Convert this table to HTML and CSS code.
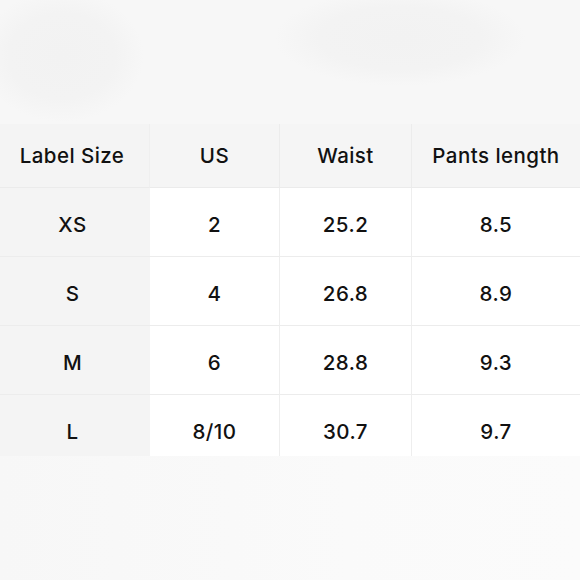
FILE: index.html
```html
<!DOCTYPE html>
<html>
<head>
<meta charset="utf-8">
<link rel="stylesheet" href="styles.css">
</head>
<body>
<div class="page">
  <div class="top"></div>
  <div class="chart">
    <div class="cell head first">Label Size</div>
    <div class="cell head">US</div>
    <div class="cell head">Waist</div>
    <div class="cell head last">Pants length</div>

    <div class="cell first">XS</div>
    <div class="cell">2</div>
    <div class="cell">25.2</div>
    <div class="cell last">8.5</div>

    <div class="cell first">S</div>
    <div class="cell">4</div>
    <div class="cell">26.8</div>
    <div class="cell last">8.9</div>

    <div class="cell first">M</div>
    <div class="cell">6</div>
    <div class="cell">28.8</div>
    <div class="cell last">9.3</div>

    <div class="cell first final">L</div>
    <div class="cell final">8/10</div>
    <div class="cell final">30.7</div>
    <div class="cell last final">9.7</div>
  </div>
  <div class="bottom"></div>
</div>
</body>
</html>
```
FILE: styles.css
```css
html, body {
  margin: 0;
  padding: 0;
}
body {
  width: 580px;
  height: 580px;
  overflow: hidden;
  background: #f8f8f8;
  font-family: Inter, "Liberation Sans", sans-serif;
}
.page {
  display: flex;
  flex-direction: column;
  width: 580px;
  height: 580px;
}
.top {
  height: 124px;
  background:
    radial-gradient(ellipse 82px 66px at 62px 56px, #f2f2f2 0%, #f3f3f3 65%, rgba(247,247,247,0) 100%),
    radial-gradient(ellipse 125px 48px at 400px 38px, #f2f2f2 0%, #f3f3f3 65%, rgba(247,247,247,0) 100%),
    #f7f7f7;
}
.chart {
  display: grid;
  grid-template-columns: 150px 130px 132px 168px;
  grid-template-rows: 64px 69px 69px 69px 61px;
}
.cell {
  display: flex;
  align-items: center;
  justify-content: center;
  font-size: 20.5px;
  font-weight: 550;
  letter-spacing: 0.45px;
  color: #111;
  background: #fff;
  border-right: 1px solid #eeeeee;
  border-bottom: 1px solid #ececec;
  box-sizing: border-box;
  padding-top: 5px;
}
.cell.head {
  background: #f5f5f5;
  border-right-color: #ececec;
  border-bottom-color: #ebebeb;
  padding-top: 0;
  padding-bottom: 1px;
}
.cell.first {
  background: #f4f4f4;
  border-right: none;
  padding-right: 5px;
}
.cell.head.first {
  border-right: 1px solid #efefef;
}
.cell.last {
  border-right: none;
}
.cell.final {
  border-bottom: none;
  align-items: flex-start;
  padding-top: 24px;
}
.bottom {
  flex: 1;
  background: linear-gradient(90deg, #f7f7f7, #fafafa 60%, #fbfbfb);
}
```
